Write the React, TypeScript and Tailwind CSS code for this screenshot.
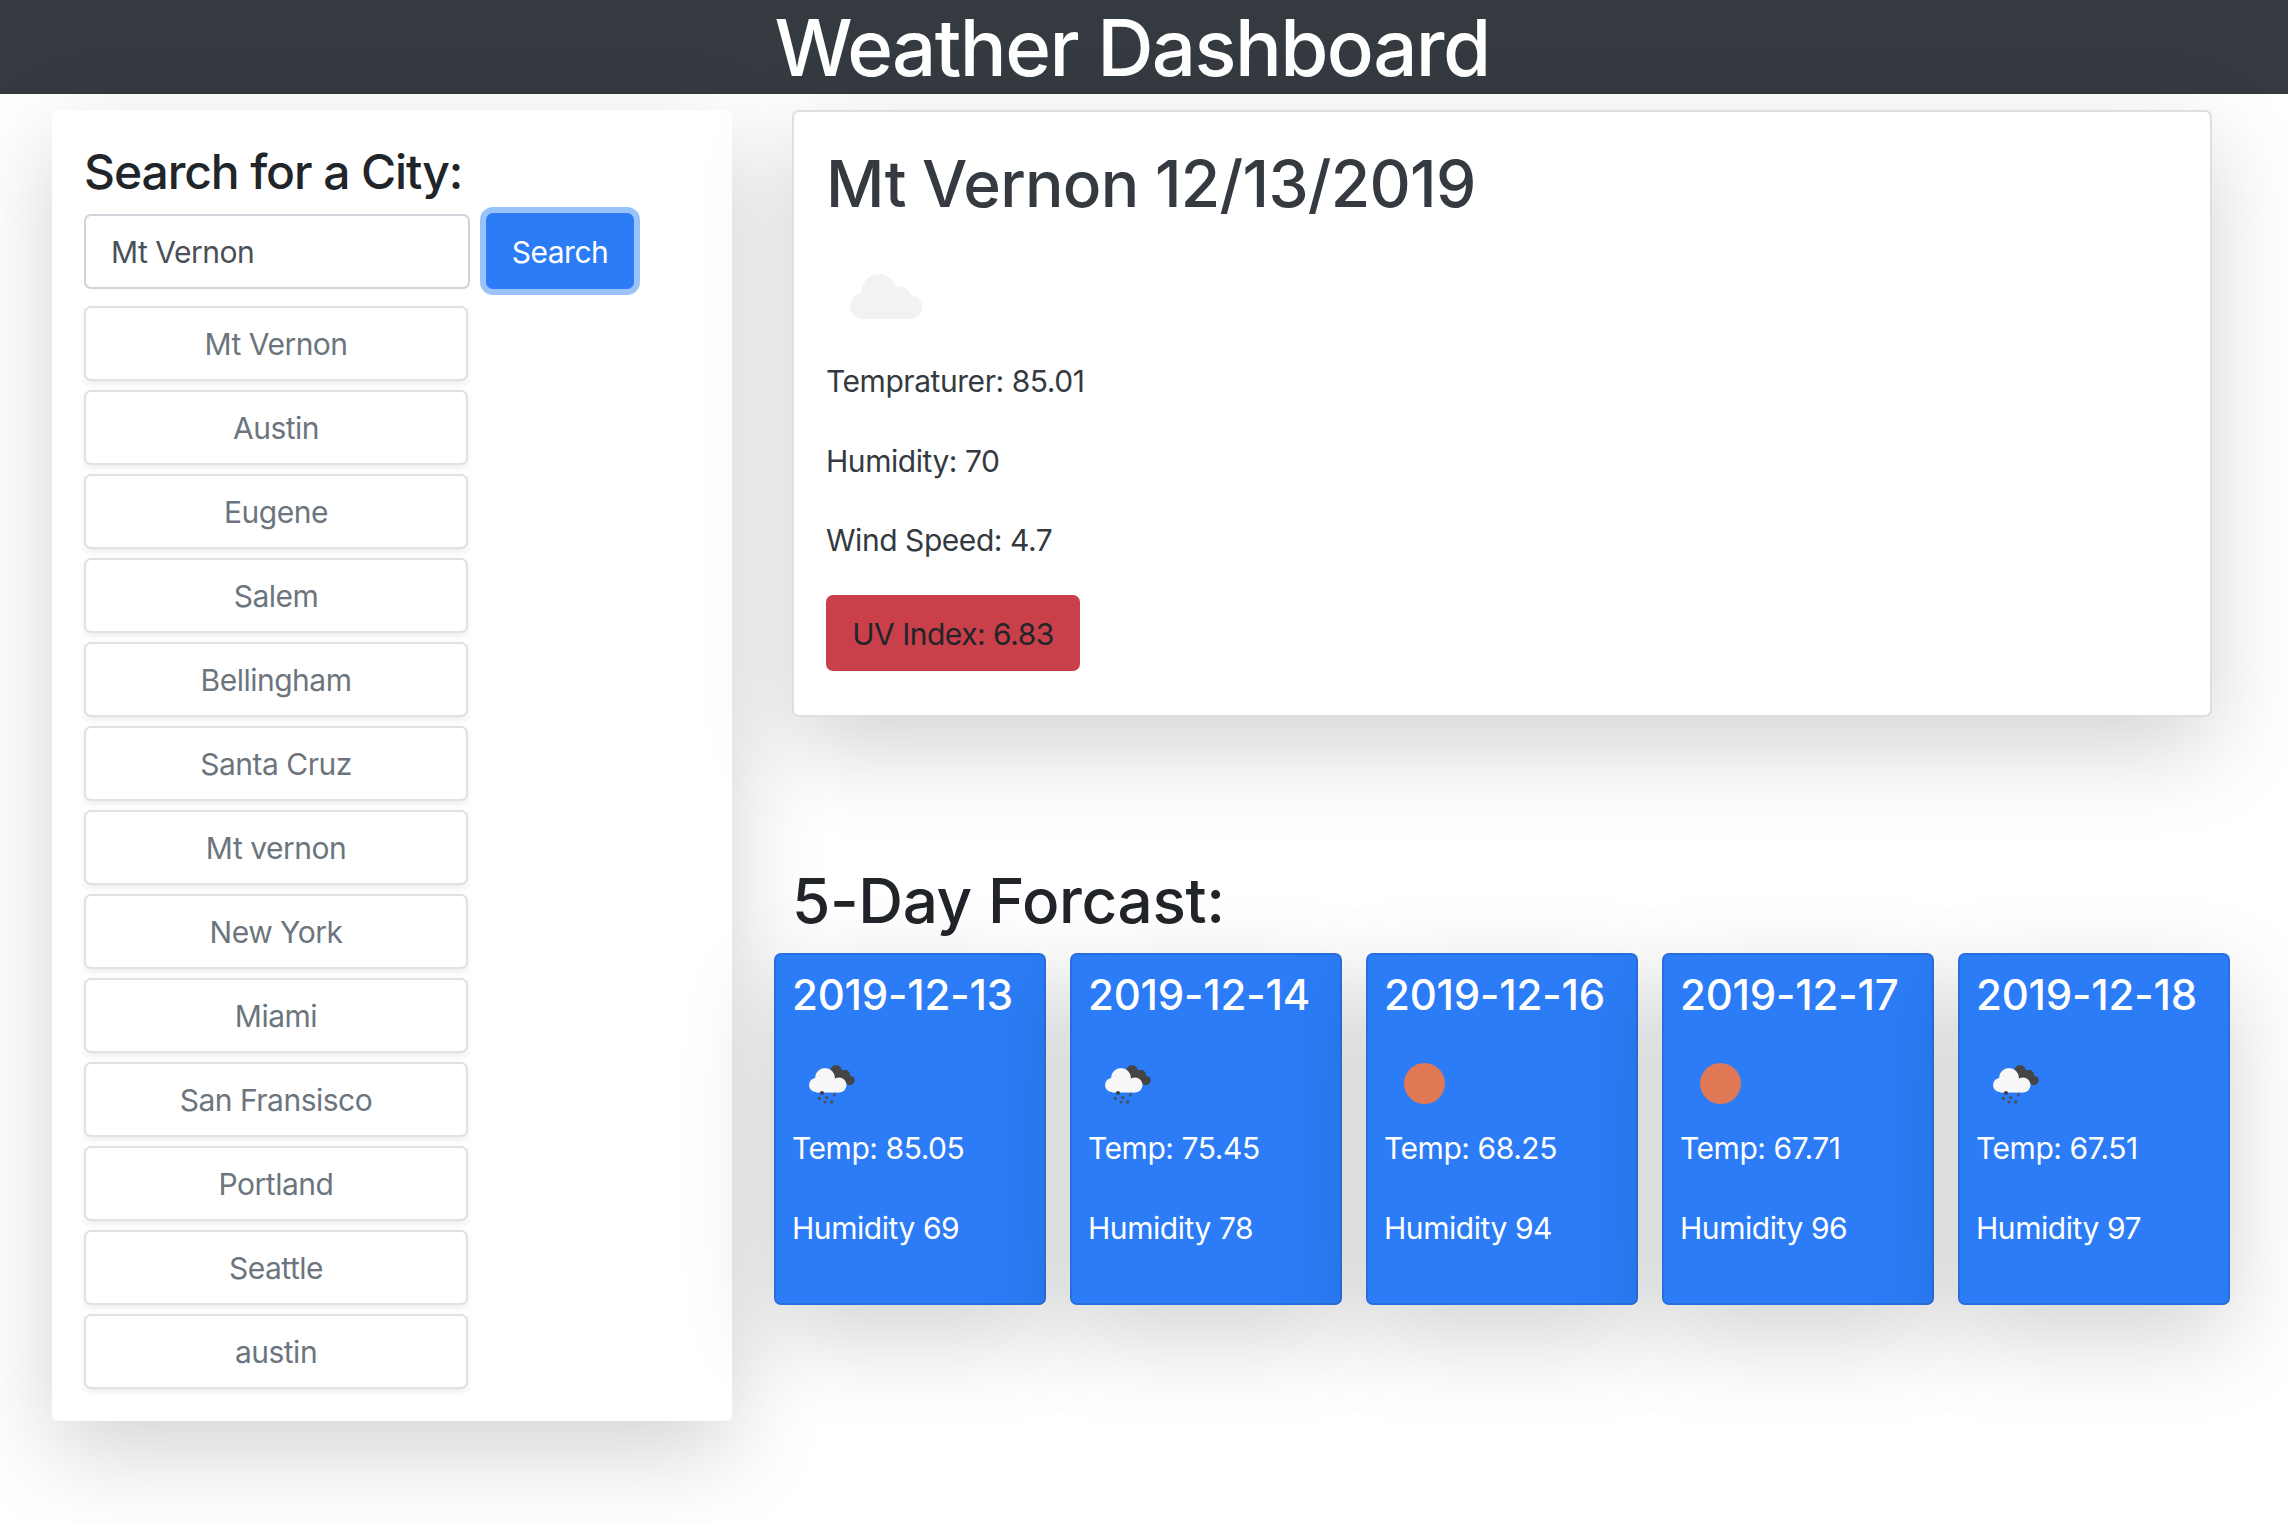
const cities = ["Mt Vernon","Austin","Eugene","Salem","Bellingham","Santa Cruz","Mt vernon","New York","Miami","San Fransisco","Portland","Seattle","austin"];
const days = [
  { d: "2019-12-13", t: "85.05", h: "69", i: "rain" },
  { d: "2019-12-14", t: "75.45", h: "78", i: "rain" },
  { d: "2019-12-16", t: "68.25", h: "94", i: "sun" },
  { d: "2019-12-17", t: "67.71", h: "96", i: "sun" },
  { d: "2019-12-18", t: "67.51", h: "97", i: "rain" },
];

function CloudIcon() {
  return (
    <svg width="72" height="45" viewBox="0 0 72 45" className="block" fill="#f2f2f2">
      <circle cx="13" cy="32" r="13" />
      <circle cx="29" cy="17" r="17" />
      <circle cx="50" cy="22" r="10" />
      <circle cx="60" cy="33" r="12" />
      <rect x="13" y="24" width="47" height="21" />
    </svg>
  );
}

function RainIcon() {
  return (
    <svg width="46" height="40" viewBox="0 0 46 40" className="block">
      <g fill="#454545">
        <circle cx="27" cy="5.7" r="5.7" />
        <circle cx="36" cy="10" r="5" />
        <circle cx="41" cy="15.5" r="4.7" />
        <rect x="24" y="5" width="14" height="12" />
      </g>
      <g fill="#f7f7f7">
        <circle cx="7" cy="20" r="7" />
        <circle cx="16" cy="13" r="10" />
        <circle cx="30" cy="20" r="7.5" />
        <rect x="7" y="15" width="23" height="12.5" />
      </g>
      <circle cx="13" cy="28" r="2" fill="#3f3f3f" />
      <circle cx="10.3" cy="33.3" r="1.6" fill="#4a4f5a" />
      <circle cx="17.7" cy="32.7" r="1.6" fill="#4a4f5a" />
      <circle cx="25.3" cy="30" r="1.4" fill="#4a4f5a" />
      <circle cx="16" cy="37" r="1.6" fill="#4a4f5a" />
      <circle cx="22.7" cy="37" r="1.7" fill="#4a4f5a" />
    </svg>
  );
}

export default function App() {
  return (
    <div className="w-[2288px] h-[1524px] bg-white overflow-hidden font-['Inter',sans-serif] text-[#212529]">
      <header className="h-[94px] bg-[#343a40] flex justify-center items-center pr-[24px]">
        <h1 className="text-[78px] leading-[94px] font-medium tracking-[-1.6px] text-white pt-[1px]">Weather Dashboard</h1>
      </header>
      <div className="flex items-start">
        <aside className="ml-[52px] mt-[16px] w-[680px] h-[1311px] bg-white rounded-[6px] shadow-[0_31px_94px_rgba(0,0,0,0.175)] px-[32px] pt-[32px]">
          <h3 className="text-[48px] leading-[60px] font-medium tracking-[-1.1px]">Search for a City:</h3>
          <div className="flex mt-[11px] items-center">
            <div className="w-[386px] h-[75px] border-2 border-[#ced4da] rounded-[7px] pl-[25px] pt-[2px] flex items-center text-[30px] tracking-[-0.5px] text-[#495057]">Mt Vernon</div>
            <button className="ml-[16px] w-[148px] h-[76px] rounded-[7px] bg-[#2b7cf6] text-white text-[30px] tracking-[-0.5px] pt-[2px] ring-[6px] ring-[#9ac3fb]">Search</button>
          </div>
          <div className="flex flex-col gap-[9px] mt-[17px]">
            {cities.map((c) => (
              <div key={c} className="w-[384px] h-[75px] border-2 border-[#dee2e6] rounded-[7px] bg-white pt-[2px] shadow-[0_3px_6px_rgba(0,0,0,0.075)] flex items-center justify-center text-[30px] tracking-[-0.5px] text-[#6c757d]">{c}</div>
            ))}
          </div>
        </aside>
        <main className="ml-[42px] mt-[16px]">
          <section className="ml-[18px] w-[1420px] h-[607px] bg-white border-2 border-[rgba(0,0,0,0.125)] rounded-[7px] shadow-[0_31px_94px_rgba(0,0,0,0.175)] pl-[32px] text-[#343a40]">
            <h2 className="text-[64px] leading-[76px] font-medium tracking-[-0.7px] mt-[34px]">Mt Vernon 12/13/2019</h2>
            <div className="ml-[24px] mt-[52px]"><CloudIcon /></div>
            <p className="text-[30px] tracking-[-0.45px] leading-[46px] mt-[39px]">Tempraturer: 85.01</p>
            <p className="text-[30px] tracking-[-0.45px] leading-[46px] mt-[34px]">Humidity: 70</p>
            <p className="text-[30px] tracking-[-0.45px] leading-[46px] mt-[33px]">Wind Speed: 4.7</p>
            <div className="mt-[32px] w-[254px] h-[76px] bg-[#c9404b] rounded-[7px] pt-[2px] flex items-center justify-center text-[30px] tracking-[-0.5px] text-[#212529]">UV Index: 6.83</div>
          </section>
          <h2 className="ml-[18px] mt-[146px] text-[62px] leading-[76px] font-medium tracking-[-0.35px]">5-Day Forcast:</h2>
          <div className="flex gap-[24px] mt-[14px]">
            {days.map((x) => (
              <div key={x.d} className="w-[272px] h-[352px] bg-[#2b7cf6] border-2 border-[#276fdd] rounded-[7px] shadow-[0_31px_94px_rgba(0,0,0,0.175)] text-white pl-[16px]">
                <div className="text-[42px] leading-[48px] font-medium tracking-[-0.2px] mt-[16px]">{x.d}</div>
                <div className="h-[48px] mt-[41px] flex items-center">
                  {x.i === "rain" ? (
                    <div className="ml-[17px] mt-[2px]"><RainIcon /></div>
                  ) : (
                    <div className="ml-[20px] mb-[2px] w-[41px] h-[41px] rounded-full bg-[#e07856]" />
                  )}
                </div>
                <p className="text-[30px] tracking-[-0.45px] leading-[46px] mt-[16px] pt-[1px]">Temp: {x.t}</p>
                <p className="text-[30px] tracking-[-0.45px] leading-[46px] mt-[33px] pt-[1px]">Humidity {x.h}</p>
              </div>
            ))}
          </div>
        </main>
      </div>
    </div>
  );
}
